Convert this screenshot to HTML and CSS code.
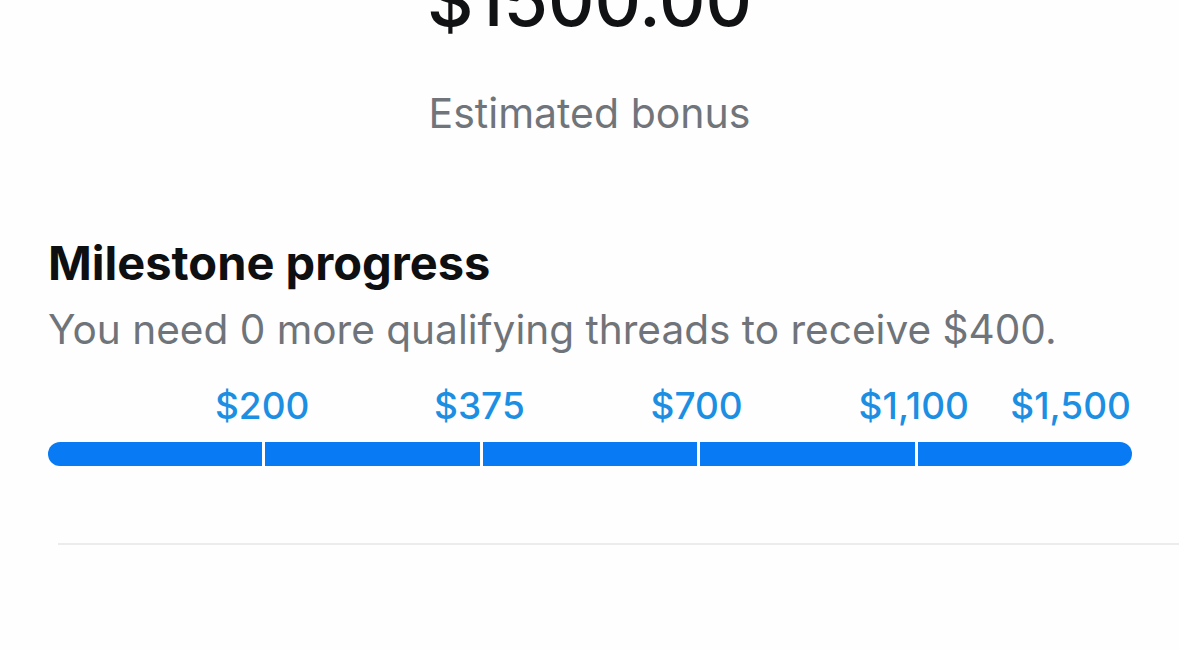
FILE: index.html
```html
<!DOCTYPE html>
<html lang="en">
<head>
<meta charset="utf-8">
<title>Milestone progress</title>
<link rel="stylesheet" href="styles.css">
</head>
<body>
<main class="page">
  <section class="summary">
    <div class="amount">$1500.00</div>
    <div class="caption">Estimated bonus</div>
  </section>
  <section class="milestones">
    <h2 class="title">Milestone progress</h2>
    <p class="subtitle">You need 0 more qualifying threads to receive $400.</p>
    <div class="labels">
      <div class="cell"><span class="label">$200</span></div>
      <div class="cell"><span class="label">$375</span></div>
      <div class="cell"><span class="label">$700</span></div>
      <div class="cell"><span class="label">$1,100</span></div>
      <div class="cell last"><span class="label">$1,500</span></div>
    </div>
    <div class="bar">
      <div class="seg"></div>
      <div class="seg"></div>
      <div class="seg"></div>
      <div class="seg"></div>
      <div class="seg"></div>
    </div>
  </section>
  <hr class="divider">
</main>
</body>
</html>
```

FILE: styles.css
```css
html, body {
  margin: 0;
  padding: 0;
  background: #fefefe;
}
body {
  font-family: Inter, "Noto Sans", "Liberation Sans", sans-serif;
  width: 1179px;
  height: 650px;
  overflow: hidden;
}
.page {
  display: flex;
  flex-direction: column;
}
.summary {
  display: flex;
  flex-direction: column;
  align-items: center;
  margin-top: -36px;
}
.amount {
  font-size: 72px;
  line-height: 72px;
  font-weight: 500;
  color: #111214;
}
.caption {
  margin-top: 52px;
  font-size: 41px;
  line-height: 50px;
  color: #70757c;
}
.milestones {
  padding: 0 48px;
  margin-top: 97px;
}
.title {
  margin: 0;
  font-size: 47px;
  line-height: 56px;
  font-weight: 700;
  color: #0e0f11;
}
.subtitle {
  margin: 15px 0 0;
  font-size: 40.6px;
  line-height: 48px;
  color: #6f747a;
}
.labels {
  display: grid;
  grid-template-columns: repeat(5, 1fr);
  column-gap: 3px;
  margin-top: 30px;
  height: 44px;
  align-items: center;
}
.cell {
  display: flex;
  justify-content: flex-end;
}
.label {
  font-size: 37px;
  line-height: 44px;
  font-weight: 500;
  color: #1c8fe3;
  transform: translateX(50%);
}
.cell.last .label {
  transform: none;
}
.bar {
  margin-top: 14px;
  margin-right: -1px;
  display: grid;
  grid-template-columns: repeat(5, 1fr);
  column-gap: 3px;
  height: 24px;
  border-radius: 12px;
  overflow: hidden;
}
.seg {
  background: #087bf4;
}
.divider {
  margin: 77px 0 0 58px;
  border: 0;
  border-top: 2px solid #ececec;
  height: 0;
}
```
